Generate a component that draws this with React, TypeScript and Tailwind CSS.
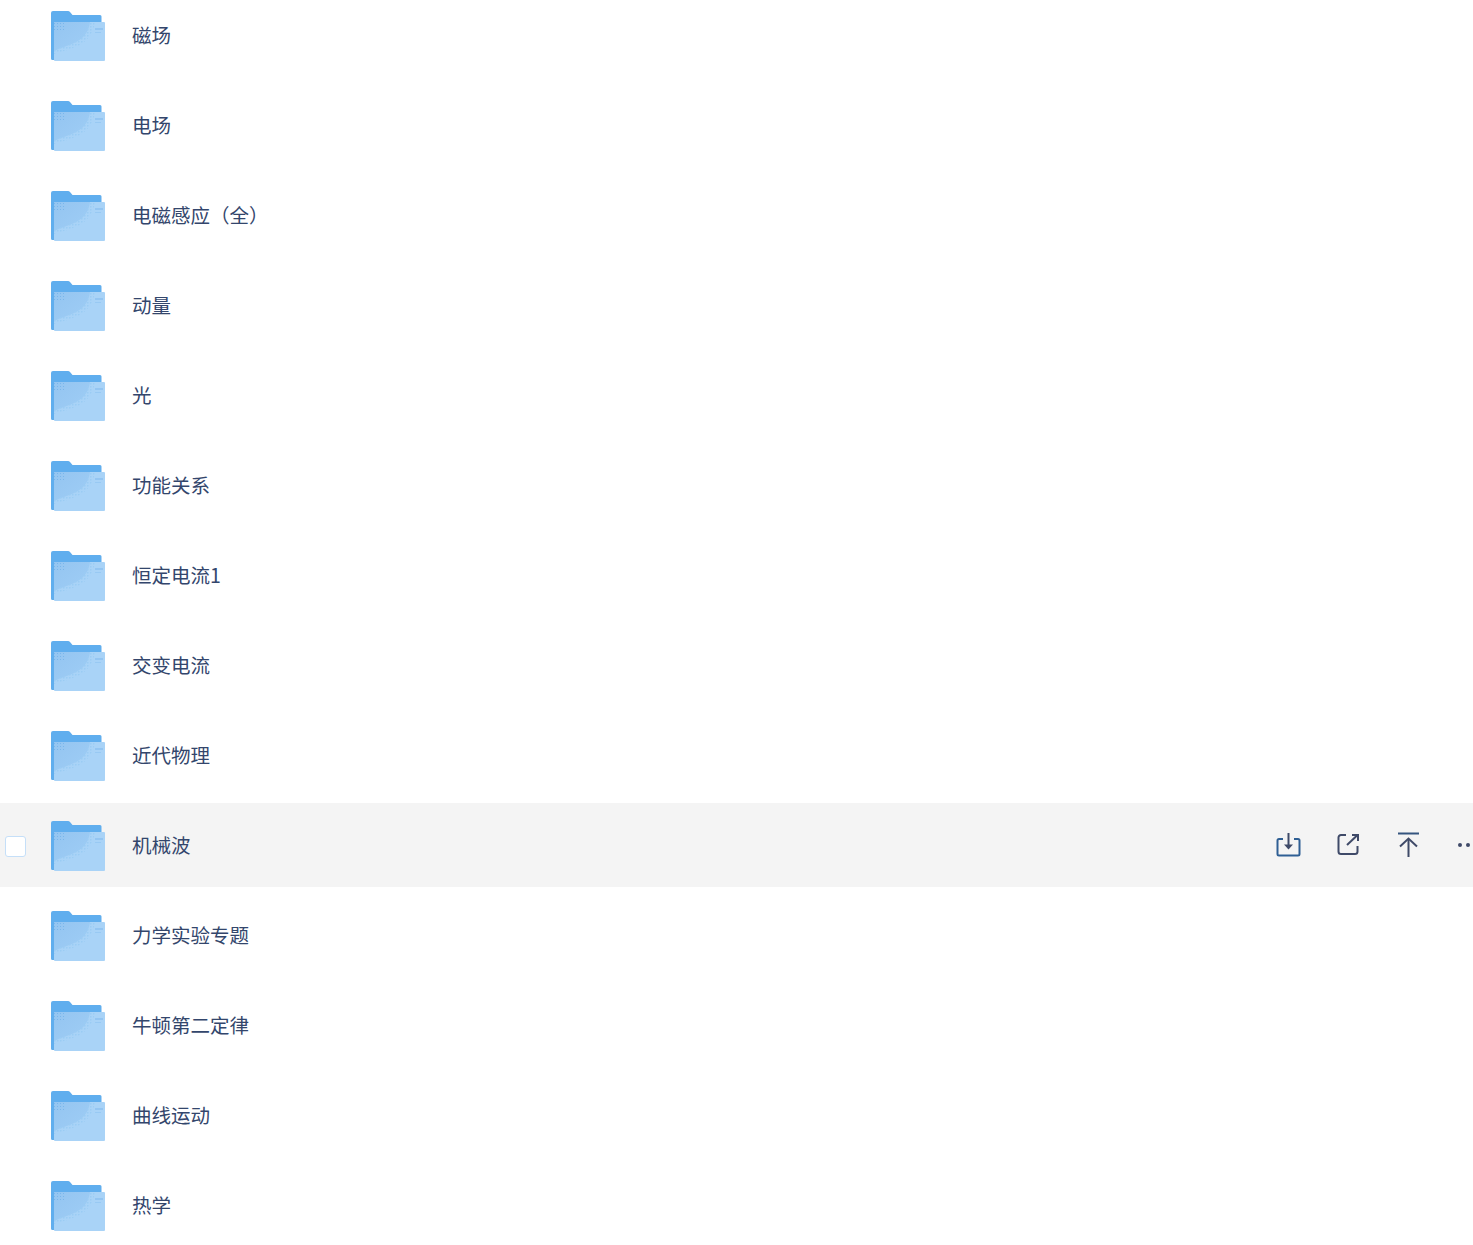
const ROWS = [
  "磁场",
  "电场",
  "电磁感应（全）",
  "动量",
  "光",
  "功能关系",
  "恒定电流1",
  "交变电流",
  "近代物理",
  "机械波",
  "力学实验专题",
  "牛顿第二定律",
  "曲线运动",
  "热学",
];

function FolderIcon() {
  return (
    <svg width="54" height="50" viewBox="0 0 54 50" className="mt-[2px] shrink-0">
      <defs>
        <linearGradient id="shade" x1="0" y1="0" x2="1" y2="1">
          <stop offset="0" stopColor="#94c5f1" />
          <stop offset="1" stopColor="#9fcdf5" />
        </linearGradient>
        <pattern id="lightdots" width="3" height="3" patternUnits="userSpaceOnUse">
          <rect width="1.500" height="1.500" fill="#9accf4" />
        </pattern>
        <pattern id="dots" width="3" height="3" patternUnits="userSpaceOnUse">
          <rect width="1" height="1" fill="#78b6ec" />
        </pattern>
      </defs>
      <path d="M0 2a2 2 0 0 1 2-2h15a3 3 0 0 1 2 1l2.500 3H49a1.500 1.500 0 0 1 1.500 1.500V13H4v36H1.500A1.500 1.500 0 0 1 0 47.500z" fill="#60aeee" />
      <path d="M3 11h50a1 1 0 0 1 1 1v37a1 1 0 0 1-1 1H4a1 1 0 0 1-1-1z" fill="#a9d3f7" />
      <path d="M3 11h36c-1 8-5 15-12 19-7 4-15 6-24 10z" fill="url(#shade)" />
      <path d="M37 11h7c-1 10-7 18-15 23-8 4-17 6-26 9v-5c9-3 16-5 23-9 6-4 10-11 11-18z" fill="url(#lightdots)" />
      <rect x="3" y="12" width="12" height="9" fill="url(#dots)" />
      <rect x="44" y="17" width="8" height="2" fill="#93c5f2" />
      <rect x="44" y="21" width="6" height="1" fill="#98c9f3" />
    </svg>
  );
}

function ActionIcons() {
  return (
    <div className="absolute right-0 top-0 flex h-full w-[213px] items-center text-[#3f4a68]">
      <svg width="26" height="26" viewBox="0 0 26 26" fill="none" stroke="currentColor" strokeWidth="2" className="ml-[15px]">
        <path d="M8 7H4a1.500 1.500 0 0 0-1.500 1.500v13.500a1.500 1.500 0 0 0 1.500 1.500h19a1.500 1.500 0 0 0 1.500-1.500V8.500A1.500 1.500 0 0 0 23 7h-4" stroke="#2f5f94" />
        <path d="M13.500 1v13" />
        <path d="M9 12.500h9l-4.500 5z" fill="currentColor" stroke="none" />
      </svg>
      <svg width="26" height="26" viewBox="0 0 26 26" fill="none" stroke="currentColor" strokeWidth="2" className="ml-[34px]">
        <path d="M11 3H6a2.500 2.500 0 0 0-2.500 2.500v14A2.500 2.500 0 0 0 6 22h14a2.500 2.500 0 0 0 2.500-2.500V14" />
        <path d="M12 13 22 3.500" />
        <path d="M17 3h6v6" />
      </svg>
      <svg width="26" height="26" viewBox="0 0 26 26" fill="none" stroke="currentColor" strokeWidth="2" className="ml-[35px]">
        <path d="M2 1.500h21" stroke="#35557f" />
        <path d="M12.500 7v18" />
        <path d="M4 14.500l8.500-8 8.500 8" />
      </svg>
      <div className="ml-[36px] flex gap-1">
        <span className="h-1 w-1 rounded-full bg-[#3f4a68]" />
        <span className="h-1 w-1 rounded-full bg-[#3f4a68]" />
      </div>
    </div>
  );
}

function Row({ name, active }: { name: string; active: boolean }) {
  return (
    <div className={`relative flex h-[84px] shrink-0 items-center ${active ? "bg-[#f4f4f4]" : ""}`}>
      <div className="flex w-[51px] justify-start pl-[5px]">
        {active && <div className="mt-[2px] h-[21px] w-[21px] rounded-[3px] border border-[#c5dff8] bg-white" />}
      </div>
      <FolderIcon />
      <span className="ml-[27px] text-[19.500px] leading-none text-[#33466c]">{name}</span>
      {active && <ActionIcons />}
    </div>
  );
}

export default function App() {
  return (
    <div className="mt-[-7px] flex flex-col gap-[6px] bg-white font-['Noto_Sans_CJK_SC','Noto_Sans',sans-serif]">
      {ROWS.map((name) => (
        <Row key={name} name={name} active={name === "机械波"} />
      ))}
    </div>
  );
}
